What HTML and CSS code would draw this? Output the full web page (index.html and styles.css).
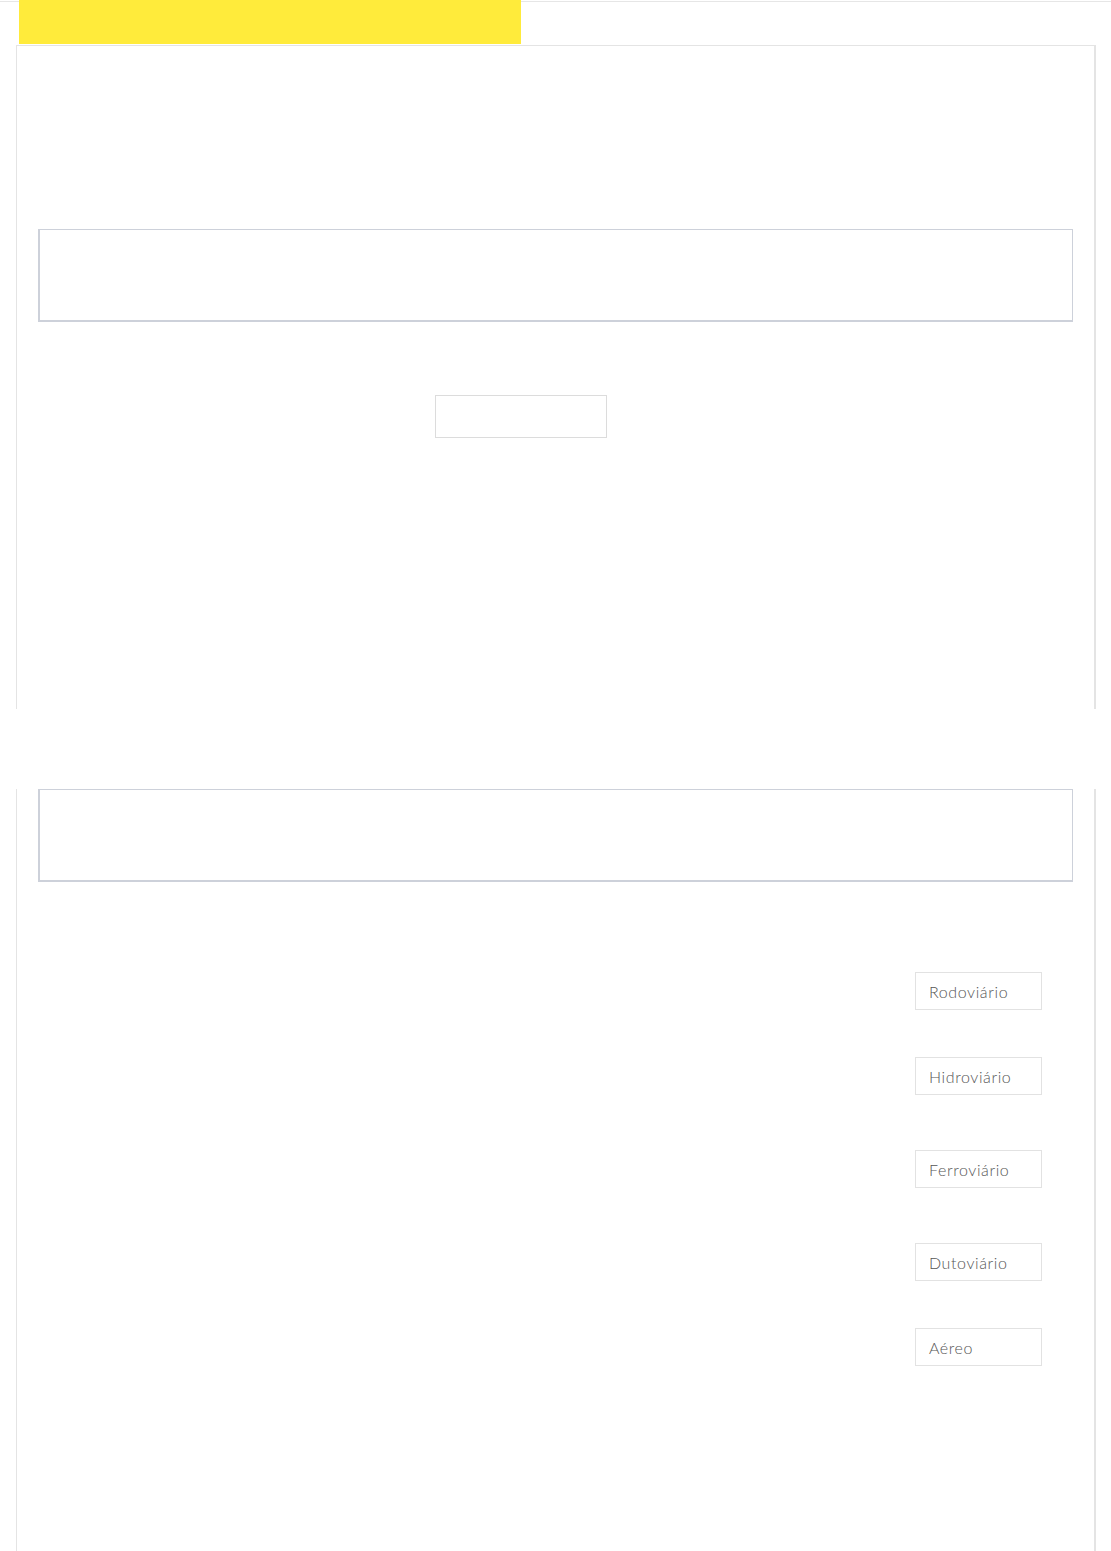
FILE: index.html
```html
<!DOCTYPE html>
<html lang="pt-BR">
<head>
    <meta charset="UTF-8">
    <meta name="viewport" content="width=device-width, initial-scale=1.0">
    <title>Modais de transporte</title>
    <link rel="stylesheet" href="styles.css">
</head>
<body>
    <div class="header">
        <div class="logo-box"></div>
    </div>

    <!-- primeiro bloco -->
    <div class="panel panel-top">
        <div class="title-box"></div>
        <div class="small-box"></div>
    </div>

    <!-- segundo bloco: modais -->
    <div class="panel panel-bottom">
        <div class="title-box"></div>
        <div class="modal-list">
            <button class="modal-btn">Rodoviário</button>
            <button class="modal-btn spaced">Hidroviário</button>
            <button class="modal-btn spaced">Ferroviário</button>
            <button class="modal-btn">Dutoviário</button>
            <button class="modal-btn">Aéreo</button>
        </div>
    </div>
</body>
</html>
```

FILE: styles.css
```css
body {
  margin: 0;
  background: #fff;
  font-family: Lato, "Open Sans", sans-serif;
  overflow: hidden;
}

.header {
  position: relative;
  height: 45px;
  padding-left: 19px;
}

.header::before {
  content: "";
  position: absolute;
  top: 1px;
  left: 0;
  right: 0;
  height: 1px;
  background: #e6e6e6;
}

.logo-box {
  position: relative;
  width: 502px;
  height: 44px;
  background-color: #ffeb3b;
}

.panel {
  box-sizing: border-box;
  width: 1080px;
  margin-left: 16px;
  padding: 0 21px;
  border: 1px solid #e4e4e4;
  border-right-width: 2px;
  border-bottom: none;
}

.panel-top {
  height: 664px;
  padding-top: 183px;
}

.panel-bottom {
  margin-top: 80px;
  border-top: none;
  height: 800px;
}

.title-box {
  height: 93px;
  box-sizing: border-box;
  border: 1px solid #cdd1da;
  border-left-width: 2px;
  border-bottom-width: 2px;
}

.small-box {
  box-sizing: border-box;
  width: 172px;
  height: 43px;
  margin: 73px 0 0 397px;
  border: 1px solid #dcdcdc;
}

.modal-list {
  display: flex;
  flex-direction: column;
  align-items: flex-end;
  gap: 47px;
  padding: 90px 31px 0 0;
}

.modal-btn {
  box-sizing: border-box;
  width: 127px;
  height: 38px;
  padding: 0 13px;
  text-align: left;
  font-family: Lato, "Open Sans", sans-serif;
  font-size: 16px;
  font-weight: 300;
  letter-spacing: 0.6px;
  color: #555;
  background: #fff;
  border: 1px solid #e2e2e2;
  border-radius: 0;
}

.modal-btn.spaced {
  margin-bottom: 8px;
}
```
